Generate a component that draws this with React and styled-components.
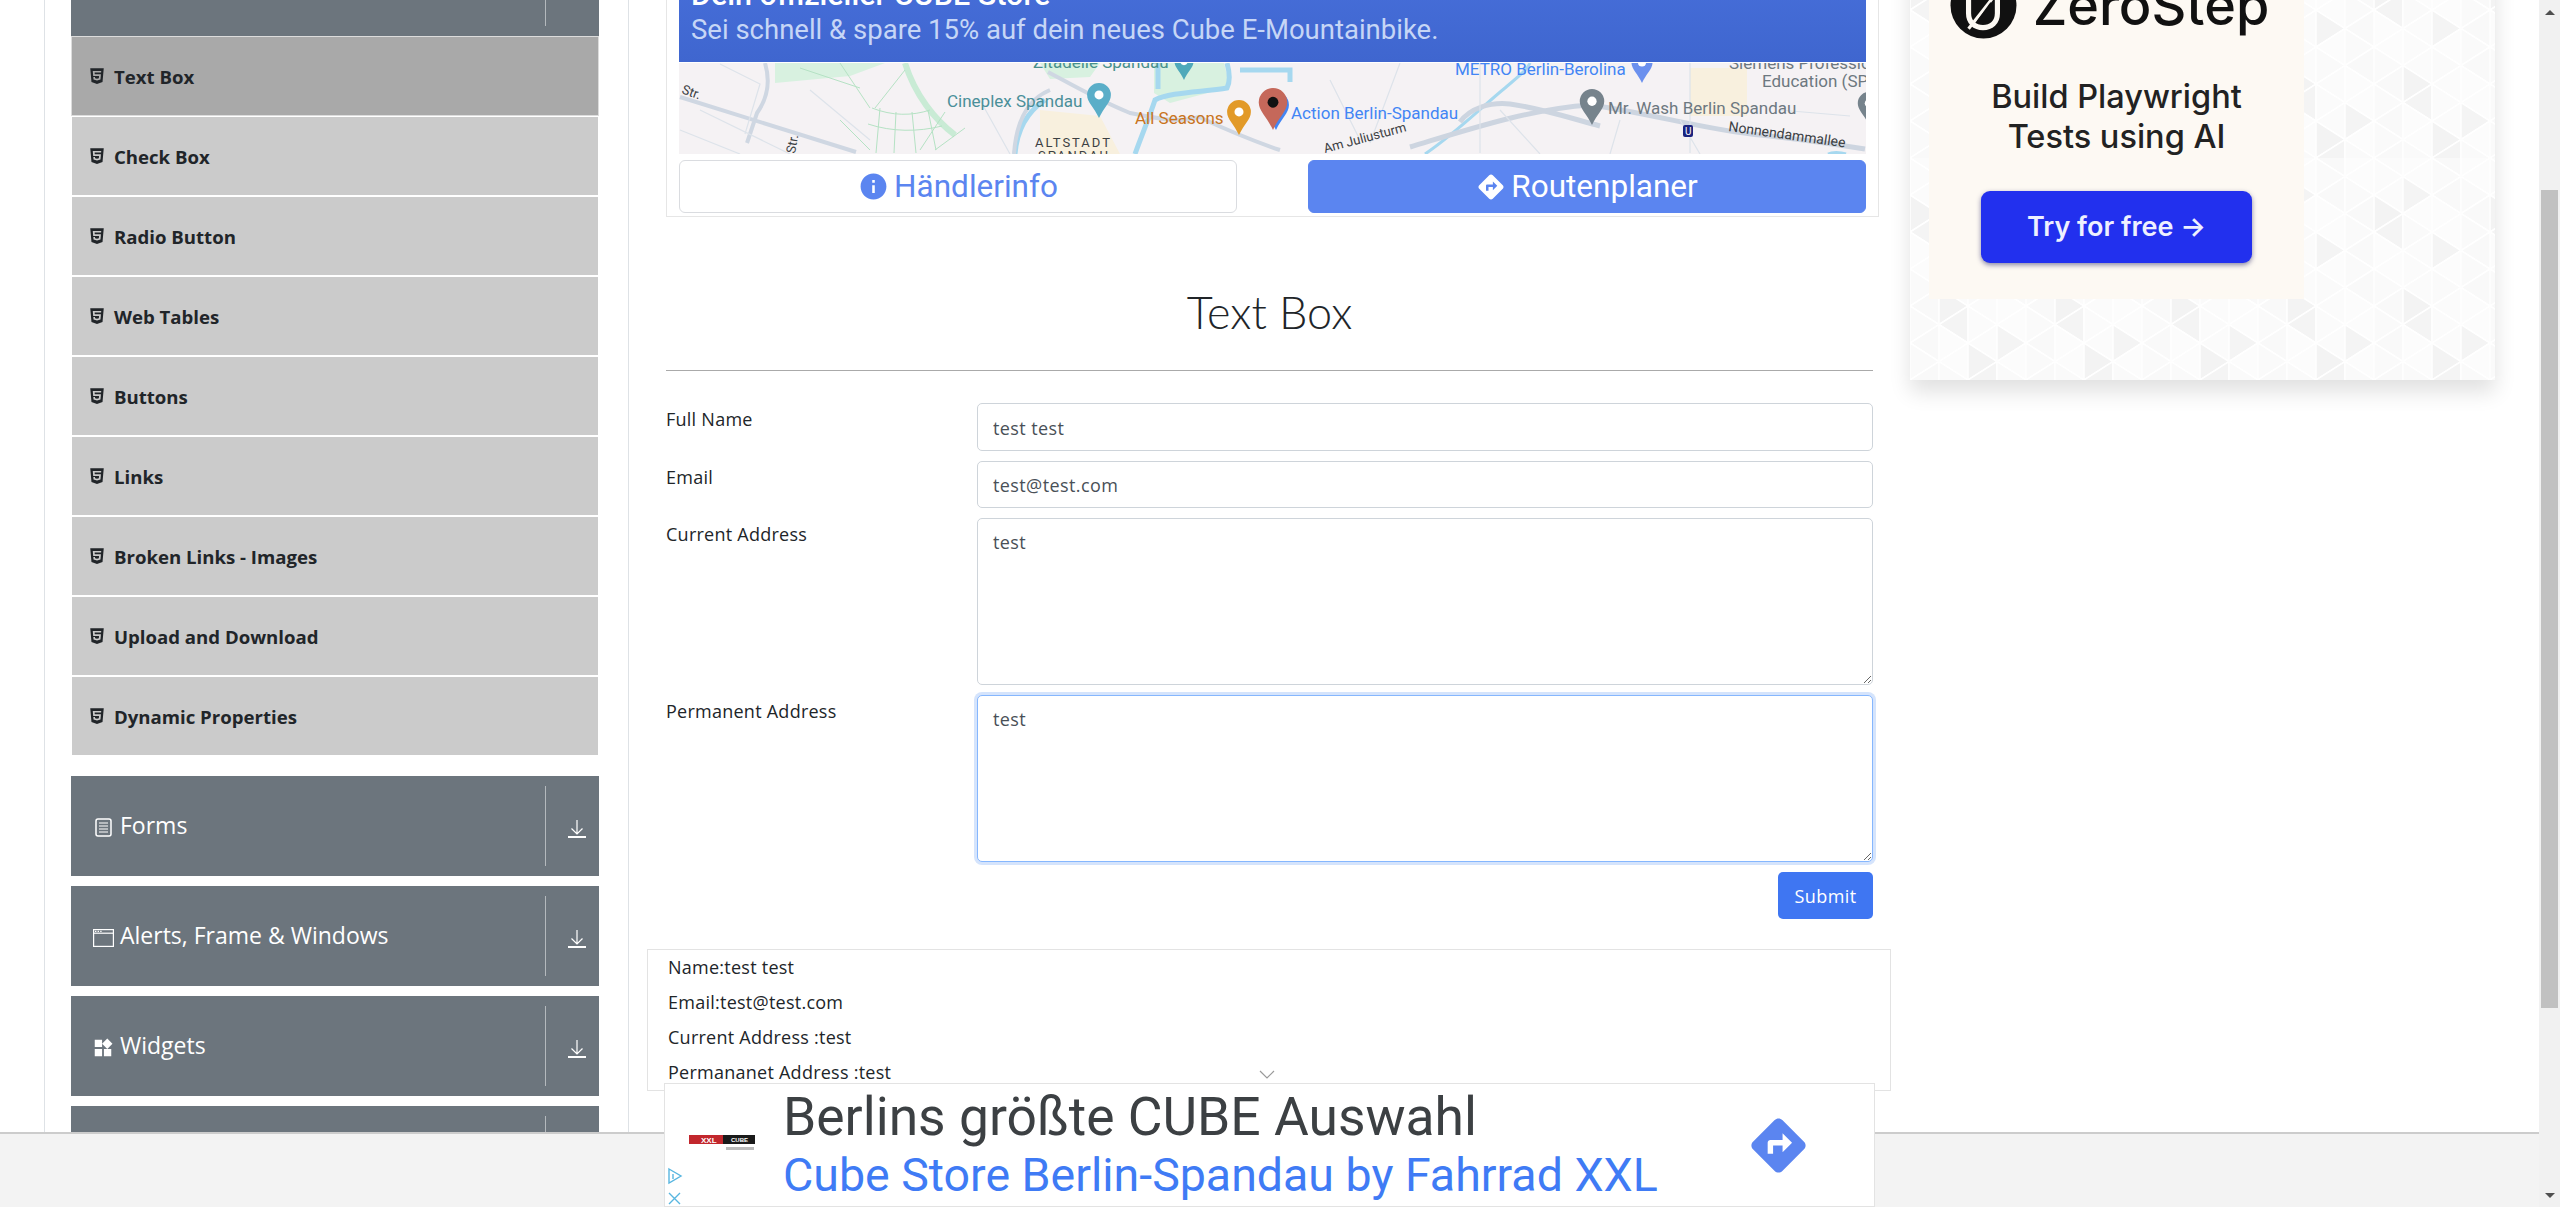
import React from "react";
import styled, { createGlobalStyle } from "styled-components";
import { FaHtml5 } from "react-icons/fa";
import { MdDirections, MdInfo, MdWidgets } from "react-icons/md";

const UI_FONT = `"Open Sans", "Noto Sans", sans-serif`;
const AD_FONT = `Roboto, "Liberation Sans", sans-serif`;

// triangle tile behind the promo card
const buildPattern = () => {
  const shades = ["#fafafa", "#f9f9f9", "#fbfbfb", "#f4f4f4", "#fafafa", "#fcfcfc", "#f9f9f9", "#fbfbfb", "#f3f3f3", "#fafafa", "#fcfcfc"];
  let polys = "";
  let seed = 3;
  for (let col = 0; col < 4; col++) {
    const x = col * 29;
    const off = col % 2 === 0 ? 0 : 18.5;
    for (let row = -1; row < 6; row++) {
      const y = row * 37 + off;
      seed = (seed * 7 + 5) % 37;
      const a = shades[seed % shades.length];
      const b = shades[(seed * 3 + 1) % shades.length];
      polys += `<polygon points='${x},${y} ${x},${y + 37} ${x + 29},${y + 18.5}' fill='${a}'/>`;
      polys += `<polygon points='${x + 29},${y + 18.5} ${x + 29},${y + 55.5} ${x},${y + 37}' fill='${b}'/>`;
    }
  }
  const svg = `<svg xmlns='http://www.w3.org/2000/svg' width='116' height='222'><g stroke='#ffffff' stroke-width='1.5'>${polys}</g></svg>`;
  return `url("data:image/svg+xml,${encodeURIComponent(svg)}")`;
};

const GlobalStyle = createGlobalStyle`
  html, body {
    margin: 0;
    height: 100%;
    overflow: hidden;
    background: #fff;
  }
  * {
    box-sizing: border-box;
  }
`;

const Shell = styled.div`
  position: relative;
  display: flex;
  width: 2560px;
  height: 1207px;
  font-family: ${UI_FONT};
  color: #212529;
  overflow: hidden;
`;

const PageColumn = styled.div`
  flex: 1;
  display: flex;
  flex-direction: column;
  min-width: 0;
`;

const Viewport = styled.div`
  height: 1132px;
  overflow: hidden;
  padding-left: 44px;
`;

const Layout = styled.div`
  display: flex;
  align-items: flex-start;
  margin-top: -64px;
`;

const Footer = styled.footer`
  flex: 1;
  background: #f3f3f3;
  border-top: 2px solid #cccccc;
`;

const Scrollbar = styled.div`
  width: 21px;
  background: #f1f1f1;
  display: flex;
  flex-direction: column;
  align-items: center;
`;

const ScrollArrow = styled.div`
  height: 24px;
  width: 100%;
  display: flex;
  align-items: center;
  justify-content: center;
  margin-top: ${(p) => (p.$down ? "auto" : "0")};

  &::before {
    content: "";
    border-left: 5px solid transparent;
    border-right: 5px solid transparent;
    border-${(p) => (p.$down ? "top" : "bottom")}: 5px solid #505050;
  }
`;

const ScrollThumb = styled.div`
  width: 17px;
  height: 818px;
  margin-top: 166px;
  background: #c1c1c1;
`;

const Sidebar = styled.aside`
  width: 585px;
  flex: none;
  padding: 0 29px 0 26px;
  border-left: 1px solid #dee2e6;
  border-right: 1px solid #dee2e6;
`;

const GroupHeader = styled.div`
  position: relative;
  height: 100px;
  margin-bottom: 10px;
  display: flex;
  align-items: center;
  padding: 0 0 2px 17px;
  background: #6c757d;
  color: #fff;
  font-size: 23px;
`;

const GroupIcon = styled.span`
  width: 30px;
  margin-right: 2px;
  padding-top: 5px;
  display: flex;
  justify-content: center;
`;

const GroupDivider = styled.span`
  position: absolute;
  left: 474px;
  top: 10px;
  bottom: 10px;
  width: 1px;
  background: #b4b9bd;
`;

const DownloadBox = styled.span`
  position: absolute;
  left: 497px;
  top: 44px;
  display: flex;
`;

const MenuList = styled.ul`
  list-style: none;
  margin: -10px 0 20px;
  padding: 0;
`;

const MenuItem = styled.li`
  height: 80px;
  display: flex;
  align-items: center;
  padding-left: 16px;
  gap: 8px;
  font-size: 18.6px;
  font-weight: 700;
  color: #212529;
  background: ${(p) => (p.$active ? "#a9a9a9" : "#cbcbcb")};
  border: 1px solid ${(p) => (p.$active ? "#dcdcdc" : "#ffffff")};
`;

const Main = styled.main`
  width: 1244px;
  flex: none;
  padding-left: 37px;
`;

const MapAd = styled.section`
  margin-right: -6px;
  padding: 0 12px 3px;
  border: 1px solid #e6e6e6;
  border-top: none;
`;

const AdBanner = styled.div`
  height: 126px;
  padding: 44px 12px 0;
  background: linear-gradient(#4a72de, #3f66cf);
  overflow: hidden;
`;

const BannerTitle = styled.div`
  font: 500 30.5px/30px ${AD_FONT};
  color: #fff;
`;

const BannerText = styled.div`
  margin-top: 4px;
  font: 400 27.5px/32px ${AD_FONT};
  color: #c6d6f6;
`;

const MapCanvas = styled.svg`
  display: block;
  width: 1187px;
  height: 91px;
  margin-top: 1px;
`;

const AdButtons = styled.div`
  display: flex;
  justify-content: space-between;
  margin-top: 6px;
`;

const AdButton = styled.div`
  width: 558px;
  height: 53px;
  display: flex;
  align-items: center;
  justify-content: center;
  gap: 5px;
  border-radius: 6px;
  font: 400 31.5px ${AD_FONT};
  color: ${(p) => (p.$primary ? "#fff" : "#5b85f0")};
  background: ${(p) => (p.$primary ? "#5b85f0" : "#fff")};
  border: 1px solid ${(p) => (p.$primary ? "#5b85f0" : "#dadce0")};
`;

const PageTitle = styled.h1`
  margin: 0;
  height: 154px;
  padding-top: 36px;
  display: flex;
  align-items: center;
  justify-content: center;
  font-family: Lato, ${UI_FONT};
  font-size: 45px;
  font-weight: 300;
  color: #212529;
  border-bottom: 1px solid #aaaaaa;
`;

const FormGrid = styled.form`
  display: grid;
  grid-template-columns: 311px 1fr;
  row-gap: 10px;
  margin-top: 32px;
`;

const FieldLabel = styled.label`
  font-size: 18px;
  line-height: 27px;
  letter-spacing: 0.25px;
  padding-top: 3px;
`;

const TextInput = styled.input`
  display: block;
  width: 100%;
  height: 47.5px;
  padding: 2px 15px 0;
  font: 18px ${UI_FONT};
  letter-spacing: 0.4px;
  color: #495057;
  border: 1px solid #ced4da;
  border-radius: 5px;
  outline: none;
`;

const TextArea = styled.textarea`
  display: block;
  width: 100%;
  height: 167px;
  padding: 10px 15px;
  font: 18px/27px ${UI_FONT};
  letter-spacing: 0.4px;
  color: #495057;
  border: 1px solid ${(p) => (p.$focused ? "#86b7fe" : "#ced4da")};
  border-radius: 5px;
  outline: none;
  box-shadow: ${(p) => (p.$focused ? "0 0 0 3px #d5e4fc" : "none")};
`;

const SubmitRow = styled.div`
  display: flex;
  justify-content: flex-end;
  grid-column: 1 / 3;
`;

const SubmitButton = styled.button`
  width: 95px;
  height: 47px;
  padding-top: 2px;
  border: none;
  border-radius: 5px;
  background: #3f76f2;
  color: #fff;
  font: 18px ${UI_FONT};
  letter-spacing: 0.4px;
`;

const OutputBox = styled.div`
  height: 142px;
  margin: 30px -18px 0 -19px;
  padding: 0 20px;
  border: 1px solid #e3e3e3;
`;

const OutputLine = styled.p`
  margin: 0;
  font-size: 18px;
  line-height: 35px;
  letter-spacing: 0.25px;
`;

const SideColumn = styled.aside`
  width: 585px;
  flex: none;
  margin-left: 37px;
  height: 444px;
  padding-left: 19px;
  background-color: #fbfbfb;
  background-image: ${buildPattern()};
  box-shadow: 0 12px 20px rgba(0, 0, 0, 0.12);
`;

const PromoCard = styled.div`
  width: 375px;
  height: 363px;
  padding-top: 36px;
  background: #fdf9f3;
  display: flex;
  flex-direction: column;
  align-items: center;
`;

const PromoBrand = styled.div`
  display: flex;
  align-items: center;
  gap: 16px;
  height: 67px;
  padding-right: 14px;
  font: 500 54px/1 Inter, sans-serif;
  color: #111;
`;

const PromoText = styled.div`
  margin-top: 38px;
  text-align: center;
  font: 500 32.5px/40px Inter, sans-serif;
  color: #222;
`;

const PromoButton = styled.div`
  width: 271px;
  height: 72px;
  margin-top: 34px;
  padding-bottom: 2px;
  display: flex;
  align-items: center;
  justify-content: center;
  border-radius: 9px;
  background: #2230ee;
  color: #eef0ff;
  font: 600 27px Inter, sans-serif;
  box-shadow: 0 2px 5px rgba(20, 20, 90, 0.5);
`;

const BottomAd = styled.div`
  position: absolute;
  left: 664px;
  top: 1083px;
  width: 1211px;
  height: 124px;
  padding-left: 24px;
  display: flex;
  align-items: center;
  background: #fff;
  border: 1px solid #e3e3e3;
`;

const AdLogo = styled.svg`
  width: 66px;
  height: 20px;
  flex: none;
  margin-right: 28px;
`;

const AdCopy = styled.div`
  flex: 1;
  font-family: ${AD_FONT};
`;

const AdHeadline = styled.div`
  font-size: 53.4px;
  line-height: 60px;
  color: #3c4043;
`;

const AdLink = styled.div`
  font-size: 46.5px;
  line-height: 56px;
  color: #3f7bf5;
`;

const AdArrow = styled.div`
  display: flex;
  margin-right: 63px;
`;

const AdChoices = styled.svg`
  position: absolute;
  left: 2px;
  bottom: 1px;
`;

const AdCollapse = styled.svg`
  position: absolute;
  left: 592px;
  top: -15px;
`;

const menuItems = [
  "Text Box",
  "Check Box",
  "Radio Button",
  "Web Tables",
  "Buttons",
  "Links",
  "Broken Links - Images",
  "Upload and Download",
  "Dynamic Properties",
];

const DownloadIcon = () => (
  <svg width="18" height="18" viewBox="0 0 18 18" fill="none" stroke="#fff">
    <path d="M9 0v14M3.5 8.5 9 14l5.5-5.5" strokeWidth="1.2" />
    <path d="M0 17h18" strokeWidth="2" />
  </svg>
);

const FormsIcon = () => (
  <svg width="17" height="19" viewBox="0 0 17 19" fill="none" stroke="#fff">
    <rect x="1" y="1" width="15" height="17" rx="2" strokeWidth="1.5" />
    <path d="M4 5h9M4 8h9M4 11h9M4 14h9" strokeWidth="1.2" />
  </svg>
);

const WindowIcon = () => (
  <svg width="21" height="18" viewBox="0 0 21 18" fill="none" stroke="#fff">
    <rect x="0.6" y="0.6" width="19.8" height="16.8" strokeWidth="1.2" />
    <path d="M1 4.2h19" strokeWidth="1.2" />
    <path d="M2 2.4h1.4M4.6 2.4H6M7.2 2.4h1.4" strokeWidth="1.4" />
  </svg>
);

const groups = [
  { label: "Forms", icon: <FormsIcon /> },
  { label: "Alerts, Frame & Windows", icon: <WindowIcon /> },
  { label: "Widgets", icon: <MdWidgets size={22} /> },
  { label: "", icon: null },
];

const Group = ({ label, icon }) => (
  <GroupHeader>
    <GroupIcon>{icon}</GroupIcon>
    {label}
    <GroupDivider />
    <DownloadBox>
      <DownloadIcon />
    </DownloadBox>
  </GroupHeader>
);

const Pin = ({ x, y, h, color, dot = "#fff" }) => {
  const r = h * 0.34;
  return (
    <g>
      <path
        d={`M${x} ${y + h}C${x - r * 0.4} ${y + h * 0.7} ${x - r} ${y + h * 0.55} ${x - r} ${y + r}a${r} ${r} 0 1 1 ${2 * r} 0C${x + r} ${y + h * 0.55} ${x + r * 0.4} ${y + h * 0.7} ${x} ${y + h}z`}
        fill={color}
      />
      <circle cx={x} cy={y + r} r={r * 0.38} fill={dot} />
    </g>
  );
};

const MapLabel = styled.text`
  font-family: ${AD_FONT};
  font-size: ${(p) => p.$size || 17}px;
  fill: ${(p) => p.$color};
`;

const MapDrawing = () => (
  <MapCanvas viewBox="679 63 1187 91">
    <rect x="679" y="63" width="1187" height="91" fill="#f5f2f4" />
    <path d="M1690 68h57v48h-57zM1040 110l60 6 20 38h-80z" fill="#f8f0de" />
    <path d="M775 63h110l-35 13-75 7zM1040 63h60l-10 14-40 2zM1154 63h70l6 24-60 16-16-10z" fill="#d8f1e0" />
    <path d="M905 63c10 32 30 57 50 72" fill="none" stroke="#c9ebd5" strokeWidth="6" />
    <path d="M1015 154c2-24 12-42 30-54M1135 154c8-22 14-36 20-54 14-8 50-8 72-12 4-8 2-18 0-25M1158 63v26M1240 70h50v12" fill="none" stroke="#a6d8ef" strokeWidth="5" />
    <path d="M1425 154c30-20 60-50 80-66 14-12 22-18 25-25M1828 154c4-2 12-2 18 0" fill="none" stroke="#a6d8ef" strokeWidth="3" />
    <path d="M680 97 856 152M765 63c6 20 2 36-8 50l-10 30M1048 72c26 14 54 30 82 41 30 6 50 10 69 4 30 14 54 24 81 33M1050 90c-24 10-34 34-36 64" fill="none" stroke="#cfd7e2" strokeWidth="4" />
    <path d="M1410 147c60-18 120-38 180-42 60 8 120 26 170 30 40 4 80 10 105 14M1460 122c10-14 30-20 50-18 30 4 60 14 90 22" fill="none" stroke="#cdd5e0" strokeWidth="5" />
    <path d="M700 110 790 154M810 90l60 50M720 64l40 20-15 50M680 130l60 24M1480 63v90M1690 63v90M1500 110l40 44M1780 110l70 6M1620 120l-10 34M1680 120l20 34M980 100l30 54M1330 80l30 60M1400 63l-30 80" fill="none" stroke="#dde3ea" strokeWidth="1.2" />
    <path d="M872 108c20 8 40 8 58 2M868 124c24 8 50 8 74 2M880 108l-4 45M896 112l-2 41M912 112l4 41M928 110l8 40M945 112l-25 38M965 128l-30 22M840 120l30 30M800 68l60 20M840 63l30 45M905 70l-30 38" fill="none" stroke="#b5e2c4" strokeWidth="1" />

    <MapLabel x="681" y="93" $size={13} $color="#3c4043" transform="rotate(20 681 93)">Str.</MapLabel>
    <MapLabel x="795" y="154" $size={13} $color="#3c4043" transform="rotate(-80 795 154)">Str.</MapLabel>
    <MapLabel x="1033" y="68" $color="#47908c">Zitadelle Spandau</MapLabel>
    <MapLabel x="947" y="107" $color="#4a8f99">Cineplex Spandau</MapLabel>
    <MapLabel x="1135" y="124" $color="#c9741c">All Seasons</MapLabel>
    <MapLabel x="1291" y="119" $color="#4285f4">Action Berlin-Spandau</MapLabel>
    <MapLabel x="1455" y="75" $color="#4285f4">METRO Berlin-Berolina</MapLabel>
    <MapLabel x="1608" y="114" $color="#6d7880">Mr. Wash Berlin Spandau</MapLabel>
    <MapLabel x="1729" y="69" $color="#6d7880">Siemens Professional</MapLabel>
    <MapLabel x="1762" y="87" $color="#6d7880">Education (SPE)</MapLabel>
    <MapLabel x="1035" y="147" $size={13} $color="#3c4043" letterSpacing="2">ALTSTADT</MapLabel>
    <MapLabel x="1038" y="160" $size={13} $color="#3c4043" letterSpacing="2">SPANDAU</MapLabel>
    <MapLabel x="1325" y="153" $size={13} $color="#3c4043" transform="rotate(-15 1325 153)">Am Juliusturm</MapLabel>
    <MapLabel x="1728" y="131" $size={14} $color="#3c4043" transform="rotate(8 1728 131)">Nonnendammallee</MapLabel>

    <Pin x={1099} y={83} h={35} color="#5aaec8" />
    <Pin x={1184} y={52} h={28} color="#4fa9ba" />
    <Pin x={1239} y={100} h={35} color="#e29a28" />
    <Pin x={1276} y={92} h={38} color="#4285f4" />
    <Pin x={1273} y={88} h={42} color="#c5685a" dot="#111" />
    <Pin x={1642} y={52} h={31} color="#6b90ee" />
    <Pin x={1592} y={89} h={36} color="#76838c" />
    <Pin x={1869} y={92} h={33} color="#76838c" />
    <rect x="1683" y="125" width="10" height="12" rx="2" fill="#1a237e" />
    <MapLabel x="1685" y="135" $size={10} $color="#fff">U</MapLabel>
  </MapCanvas>
);

const ZeroStepMark = () => (
  <svg width="67" height="67" viewBox="0 0 65 65">
    <circle cx="32.5" cy="32.5" r="32" fill="#111" />
    <path d="M18 22v18c0 9 6 14 14 14s14-5 14-14V20" fill="none" stroke="#fdf9f3" strokeWidth="5" />
    <path d="M18 55 44 22" stroke="#fdf9f3" strokeWidth="3" />
    <path d="M27 48 40 30" stroke="#111" strokeWidth="2" />
  </svg>
);

const App = () => (
  <Shell>
    <GlobalStyle />
    <PageColumn>
      <Viewport>
        <Layout>
          <Sidebar>
            <GroupHeader>
              <GroupDivider />
            </GroupHeader>
            <MenuList>
              {menuItems.map((item, i) => (
                <MenuItem key={item} $active={i === 0}>
                  <FaHtml5 size={18} />
                  {item}
                </MenuItem>
              ))}
            </MenuList>
            {groups.map((g, i) => (
              <Group key={i} label={g.label} icon={g.icon} />
            ))}
          </Sidebar>
          <Main>
            <MapAd>
              <AdBanner>
                <BannerTitle>Dein offizieller CUBE Store</BannerTitle>
                <BannerText>Sei schnell &amp; spare 15% auf dein neues Cube E-Mountainbike.</BannerText>
              </AdBanner>
              <MapDrawing />
              <AdButtons>
                <AdButton>
                  <MdInfo size={31} />
                  Händlerinfo
                </AdButton>
                <AdButton $primary>
                  <MdDirections size={30} />
                  Routenplaner
                </AdButton>
              </AdButtons>
            </MapAd>
            <PageTitle>Text Box</PageTitle>
            <FormGrid>
              <FieldLabel>Full Name</FieldLabel>
              <TextInput defaultValue="test test" />
              <FieldLabel>Email</FieldLabel>
              <TextInput defaultValue="test@test.com" />
              <FieldLabel>Current Address</FieldLabel>
              <TextArea defaultValue="test" />
              <FieldLabel>Permanent Address</FieldLabel>
              <TextArea defaultValue="test" $focused />
              <SubmitRow>
                <SubmitButton type="button">Submit</SubmitButton>
              </SubmitRow>
            </FormGrid>
            <OutputBox>
              <OutputLine>Name:test test</OutputLine>
              <OutputLine>Email:test@test.com</OutputLine>
              <OutputLine>Current Address :test</OutputLine>
              <OutputLine>Permananet Address :test</OutputLine>
            </OutputBox>
          </Main>
          <SideColumn>
            <PromoCard>
              <PromoBrand>
                <ZeroStepMark />
                ZeroStep
              </PromoBrand>
              <PromoText>
                Build Playwright
                <br />
                Tests using AI
              </PromoText>
              <PromoButton>Try for free →</PromoButton>
            </PromoCard>
          </SideColumn>
        </Layout>
      </Viewport>
      <Footer />
    </PageColumn>
    <Scrollbar>
      <ScrollArrow />
      <ScrollThumb />
      <ScrollArrow $down />
    </Scrollbar>
    <BottomAd>
      <AdCollapse width="20" height="12" viewBox="0 0 20 12" fill="none" stroke="#9a9a9a" strokeWidth="1.2">
        <path d="M3 2l7 7 7-7" />
      </AdCollapse>
      <AdLogo viewBox="0 0 66 20">
        <rect x="0" y="0" width="34" height="9" fill="#c2272d" />
        <rect x="34" y="0" width="32" height="9" fill="#1a1a1a" />
        <text x="12" y="7.5" fontSize="8" fontWeight="700" fontFamily="Liberation Sans" fill="#fff">XXL</text>
        <text x="42" y="7" fontSize="6" fontWeight="700" fontFamily="Liberation Sans" fill="#fff">CUBE</text>
        <rect x="37" y="12" width="28" height="3" fill="#bbb" />
      </AdLogo>
      <AdCopy>
        <AdHeadline>Berlins größte CUBE Auswahl</AdHeadline>
        <AdLink>Cube Store Berlin-Spandau by Fahrrad XXL</AdLink>
      </AdCopy>
      <AdArrow>
        <MdDirections size={65} color="#5b85f0" />
      </AdArrow>
      <AdChoices width="16" height="38" viewBox="0 0 16 38" fill="none" stroke="#58b6e0" strokeWidth="1.4">
        <path d="M2 2l12 7-12 7zM6 7v5" />
        <path d="M2 26l11 11M13 26 2 37" />
      </AdChoices>
    </BottomAd>
  </Shell>
);

export default App;
